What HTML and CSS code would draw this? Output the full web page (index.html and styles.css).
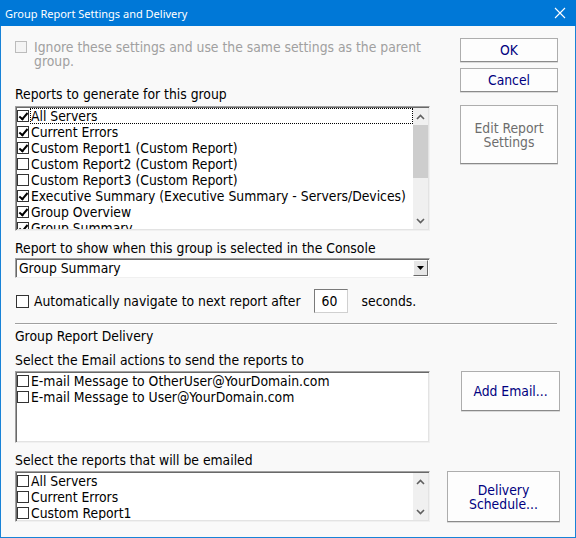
FILE: index.html
```html
<!DOCTYPE html>
<html lang="en">
<head>
    <meta charset="UTF-8">
    <title>Group Report Settings and Delivery</title>
    <link rel="stylesheet" href="styles.css">
</head>
<body>
    <div class="window">
        <div class="titlebar">
            <span class="title">Group Report Settings and Delivery</span>
            <svg class="close" width="12" height="12" viewBox="0 0 12 12">
                <path d="M1 1 L11 11 M11 1 L1 11" stroke="#fff" stroke-width="1.1" fill="none"/>
            </svg>
        </div>

        <div class="content">
            <div class="upper">
                <div class="main-col">
                    <div class="ignore-row">
                        <span class="cb disabled"></span>
                        <span class="ignore-text">Ignore these settings and use the same settings as the parent<br>group.</span>
                    </div>

                    <div class="label first-label">Reports to generate for this group</div>
                    <div class="listbox reports-list">
                        <div class="items">
                            <div class="item"><span class="cb on"></span><span class="text focus">All Servers</span></div>
                            <div class="item"><span class="cb on"></span><span class="text">Current Errors</span></div>
                            <div class="item"><span class="cb on"></span><span class="text">Custom Report1 (Custom Report)</span></div>
                            <div class="item"><span class="cb"></span><span class="text">Custom Report2 (Custom Report)</span></div>
                            <div class="item"><span class="cb"></span><span class="text">Custom Report3 (Custom Report)</span></div>
                            <div class="item"><span class="cb on"></span><span class="text">Executive Summary (Executive Summary - Servers/Devices)</span></div>
                            <div class="item"><span class="cb on"></span><span class="text">Group Overview</span></div>
                            <div class="item"><span class="cb on"></span><span class="text">Group Summary</span></div>
                        </div>
                        <div class="scrollbar">
                            <div class="sb-btn">
                                <svg width="9" height="6" viewBox="0 0 9 6"><path d="M1 5 L4.5 1.5 L8 5" stroke="#606060" stroke-width="1.6" fill="none"/></svg>
                            </div>
                            <div class="sb-track"><div class="sb-thumb"></div></div>
                            <div class="sb-btn">
                                <svg width="9" height="6" viewBox="0 0 9 6"><path d="M1 1 L4.5 4.5 L8 1" stroke="#606060" stroke-width="1.6" fill="none"/></svg>
                            </div>
                        </div>
                    </div>

                    <div class="label gap-label">Report to show when this group is selected in the Console</div>
                    <div class="combo">
                        <span class="combo-value">Group Summary</span>
                        <span class="combo-btn">
                            <svg width="7" height="4" viewBox="0 0 7 4"><path d="M0 0 H7 L3.5 4 Z" fill="#000"/></svg>
                        </span>
                    </div>

                    <div class="auto-row">
                        <span class="cb plain"></span>
                        <span class="auto-text">Automatically navigate to next report after</span>
                        <span class="num-box">60</span>
                        <span class="auto-suffix">seconds.</span>
                    </div>
                </div>

                <div class="side-col">
                    <button class="btn small-btn">OK</button>
                    <button class="btn small-btn">Cancel</button>
                    <button class="btn edit-btn" disabled>Edit Report<br>Settings</button>
                </div>
            </div>

            <div class="separator"></div>

            <div class="label delivery-label">Group Report Delivery</div>

            <div class="label gap-label">Select the Email actions to send the reports to</div>
            <div class="delivery-row">
                <div class="listbox email-list">
                    <div class="items">
                        <div class="item"><span class="cb"></span><span class="text">E-mail Message to OtherUser@YourDomain.com</span></div>
                        <div class="item"><span class="cb"></span><span class="text">E-mail Message to User@YourDomain.com</span></div>
                    </div>
                </div>
                <button class="btn add-btn">Add Email...</button>
            </div>

            <div class="label gap-label">Select the reports that will be emailed</div>
            <div class="delivery-row">
                <div class="listbox mail-list">
                    <div class="items">
                        <div class="item"><span class="cb"></span><span class="text">All Servers</span></div>
                        <div class="item"><span class="cb"></span><span class="text">Current Errors</span></div>
                        <div class="item"><span class="cb"></span><span class="text">Custom Report1</span></div>
                    </div>
                    <div class="scrollbar">
                        <div class="sb-btn">
                            <svg width="9" height="6" viewBox="0 0 9 6"><path d="M1 5 L4.5 1.5 L8 5" stroke="#606060" stroke-width="1.6" fill="none"/></svg>
                        </div>
                        <div class="sb-track"></div>
                        <div class="sb-btn">
                            <svg width="9" height="6" viewBox="0 0 9 6"><path d="M1 1 L4.5 4.5 L8 1" stroke="#606060" stroke-width="1.6" fill="none"/></svg>
                        </div>
                    </div>
                </div>
                <button class="btn schedule-btn">Delivery<br>Schedule...</button>
            </div>
        </div>
    </div>
</body>
</html>
```

FILE: styles.css
```css
body {
    margin: 0;
    font-family: "DejaVu Sans Condensed", "DejaVu Sans", sans-serif;
    font-size: 13.8px;
    color: #000;
}
.window {
    width: 576px;
    height: 538px;
    box-sizing: border-box;
    border: 1px solid #1883d7;
    border-top: 0;
    background-color: #f9f9f9;
    display: flex;
    flex-direction: column;
}
.titlebar {
    height: 26px;
    flex: none;
    background-color: #0078d7;
    margin: 0 -1px;
    padding: 0 10px 0 5px;
    display: flex;
    align-items: center;
    justify-content: space-between;
}
.title {
    font-family: "Noto Sans", sans-serif;
    font-size: 11px;
    color: #fff;
}
.close {
    display: block;
}
.content {
    padding-left: 14px;
}
.upper {
    display: flex;
}
.main-col {
    width: 415px;
}
.side-col {
    margin-left: 30px;
    width: 98px;
    padding-top: 12px;
    display: flex;
    flex-direction: column;
}
.label {
    line-height: 14px;
    white-space: nowrap;
}
.first-label {
    margin-top: 19px;
}
.gap-label {
    margin-top: 10px;
}
.delivery-label {
    margin-top: 4px;
}

/* checkboxes */
.cb {
    position: relative;
    display: inline-block;
    flex: none;
    width: 12px;
    height: 12px;
    box-sizing: border-box;
    border: 1px solid #333;
    background-color: #fff;
}
.cb.on::after {
    content: '';
    position: absolute;
    left: 3px;
    top: 0;
    width: 3px;
    height: 7px;
    border: solid #000;
    border-width: 0 2px 2px 0;
    transform: rotate(40deg);
}
.cb.disabled {
    border-color: #bcbcbc;
    background-color: #f4f4f4;
}
.cb.plain {
    width: 13px;
    height: 13px;
    border-color: #333;
}

.ignore-row {
    margin-top: 14px;
    display: flex;
    align-items: flex-start;
}
.ignore-row .cb {
    margin-top: 1px;
}
.ignore-text {
    margin-left: 7px;
    line-height: 14px;
    color: #a0a0a0;
    white-space: nowrap;
}

/* list boxes */
.listbox {
    display: flex;
    box-sizing: border-box;
    width: 415px;
    background-color: #fff;
    border: 1px solid;
    border-color: #a0a0a0 #f0f0f0 #f0f0f0 #a0a0a0;
    box-shadow: inset 1px 1px 0 #696969, inset -1px -1px 0 #e3e3e3;
    padding: 1px;
}
.reports-list {
    margin-top: 5px;
    height: 125px;
}
.email-list {
    height: 72px;
}
.mail-list {
    height: 51px;
}
.items {
    flex: 1;
    overflow: hidden;
}
.item {
    height: 16px;
    display: flex;
    align-items: center;
    white-space: nowrap;
}
.item .text {
    margin-left: 1px;
    padding: 0;
    line-height: 14px;
    border: 1px solid transparent;
}
.item .text.focus {
    flex: 1;
    border: 1px dotted #000;
}
.scrollbar {
    width: 15px;
    flex: none;
    background-color: #f0f0f0;
    display: flex;
    flex-direction: column;
}
.sb-btn {
    height: 17px;
    flex: none;
    display: flex;
    align-items: center;
    justify-content: center;
}
.sb-track {
    flex: 1;
}
.sb-thumb {
    height: 53px;
    background-color: #cdcdcd;
}

/* combo box */
.combo {
    margin-top: 3px;
    height: 20px;
    box-sizing: border-box;
    background-color: #fff;
    border: 1px solid;
    border-color: #a0a0a0 #f0f0f0 #f0f0f0 #a0a0a0;
    box-shadow: inset 1px 1px 0 #696969;
    display: flex;
    align-items: center;
    padding: 1px 1px 1px 3px;
}
.combo-value {
    flex: 1;
    line-height: 14px;
}
.combo-btn {
    width: 15px;
    height: 16px;
    box-sizing: border-box;
    background-color: #e6e6e6;
    border: 1px solid;
    border-color: #fff #696969 #696969 #fff;
    display: flex;
    align-items: center;
    justify-content: center;
}

/* auto navigate row */
.auto-row {
    margin-top: 11px;
    height: 24px;
    display: flex;
    align-items: center;
}
.auto-row .cb {
    margin-left: 1px;
}
.auto-text {
    margin-left: 5px;
}
.num-box {
    margin-left: 13px;
    width: 34px;
    height: 24px;
    box-sizing: border-box;
    background-color: #fff;
    border: 1px solid;
    border-color: #7a7a7a #d0d0d0 #d0d0d0 #7a7a7a;
    padding: 3px 0 0 7px;
    line-height: 16px;
}
.auto-suffix {
    margin-left: 14px;
}

.separator {
    margin-top: 10px;
    width: 542px;
    height: 1px;
    background-color: #a0a0a0;
    border-bottom: 1px solid #fff;
}

/* buttons */
.btn {
    font-family: inherit;
    font-size: 13.8px;
    line-height: 14px;
    color: #000080;
    background-color: #fdfdfd;
    border: 1px solid #adadad;
    border-bottom-color: #8a8a8a;
    box-shadow: 0 1px 0 #dadada;
    padding: 0;
    cursor: pointer;
}
.btn:disabled {
    color: #6d6d6d;
    cursor: default;
}
.small-btn {
    height: 24px;
    margin-bottom: 6px;
}
.edit-btn {
    margin-top: 7px;
    height: 59px;
}

.delivery-row {
    margin-top: 4px;
    display: flex;
    align-items: flex-start;
}
.add-btn {
    margin-left: 31px;
    width: 99px;
    height: 40px;
}
.schedule-btn {
    margin-left: 17px;
    width: 113px;
    height: 51px;
}
```
